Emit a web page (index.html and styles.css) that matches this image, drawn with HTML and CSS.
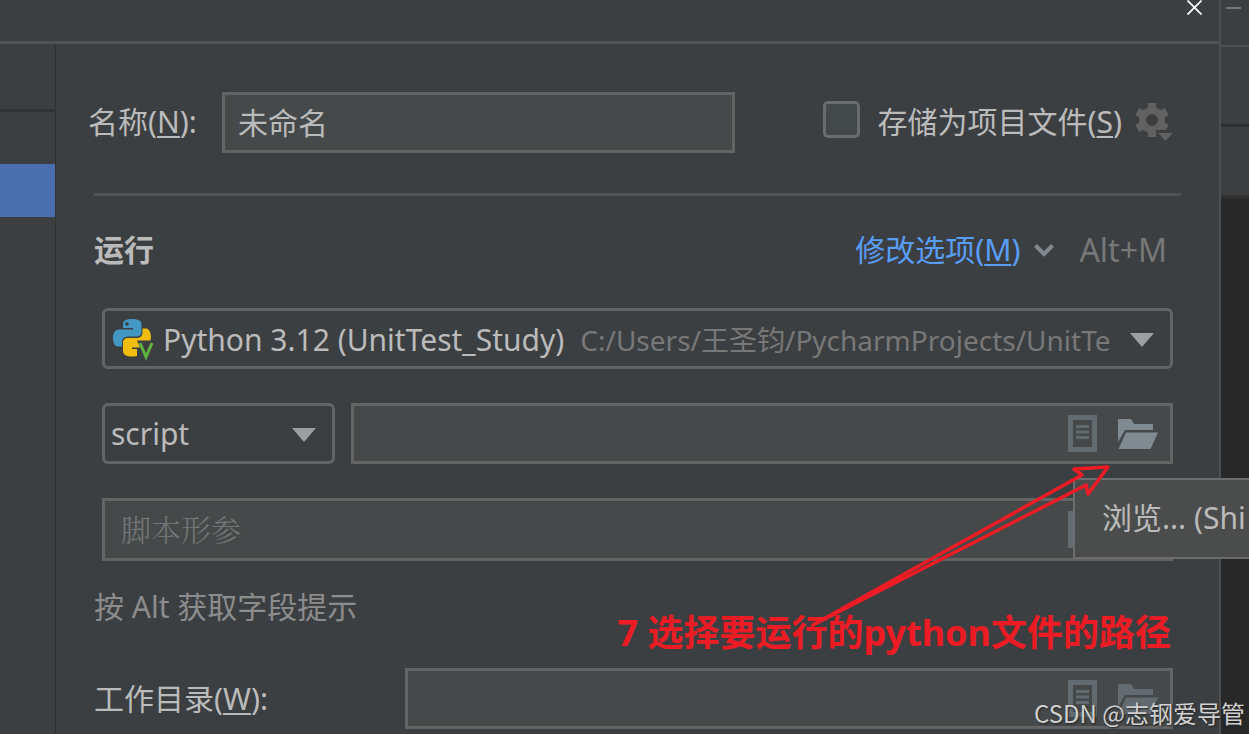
FILE: index.html
```html
<!DOCTYPE html>
<html lang="zh-CN">
<head>
<meta charset="utf-8">
<title>运行配置</title>
<link rel="stylesheet" href="styles.css">
</head>
<body>
<svg class="defs" aria-hidden="true">
  <symbol id="document" viewBox="0 0 29 37"><path fill-rule="evenodd" d="M0 0h29v37H0zM5 5v27h19V5z"/><path d="M8 10h13v3H8zM8 15.500h13v3H8zM8 21h13v3H8z"/></symbol>
  <symbol id="folder" viewBox="0 0 40 30"><path d="M0 0h13l3 5h19v6H7L0 23zM8 13.500h32L32.500 30H.5z"/></symbol>
</svg>
<div class="window">
  <section class="dialog">
    <header class="titlebar">
      <button class="close" aria-label="关闭"><svg viewBox="0 0 15 15"><path d="M.5.5l14 14M14.500.5l-14 14" fill="none" stroke="#fff" stroke-width="1.700"/></svg></button>
    </header>
    <div class="body">
      <nav class="sidebar">
        <div class="sidebar-tools"></div>
        <div class="sidebar-selected"></div>
      </nav>
      <main class="form">
        <div class="name-row">
          <label class="name-label" for="name">名称(<u>N</u>):</label>
          <input class="name-input" id="name" type="text" value="未命名">
          <input class="check" id="store" type="checkbox">
          <label for="store">存储为项目文件(<u>S</u>)</label>
          <button class="gear" aria-label="设置"><svg viewBox="0 0 37 38">
            <g fill="none" stroke="#616161">
              <circle cx="16" cy="18" r="9.500" stroke-width="7"/>
              <path stroke-width="8" d="M16 1v34"  stroke-dasharray="6 22"/>
              <path stroke-width="8" d="M16 1v34" stroke-dasharray="6 22" transform="rotate(60 16 18)"/>
              <path stroke-width="8" d="M16 1v34" stroke-dasharray="6 22" transform="rotate(120 16 18)"/>
            </g>
            <path d="M21 29h17v2l-9 8z" fill="#3c3f41" stroke="#3c3f41" stroke-width="2"/><path d="M22 31h15l-7.500 8z" fill="#616161"/></svg></button>
        </div>
        <div class="section-head">
          <h2>运行</h2>
          <a class="options" href="#">修改选项(<u>M</u>)</a>
          <svg class="chevron" viewBox="0 0 22 14"><path d="M2.500 2.500L11 11l8.500-8.500" fill="none" stroke="#7f8b91" stroke-width="4"/></svg>
          <span class="shortcut">Alt+M</span>
        </div>
        <div class="fields">
          <button class="combo" aria-haspopup="listbox">
            <svg class="python" viewBox="0 0 41 41">
              <path fill="#4297c3" d="M19 0c-6 0-9 1.500-9 5v4h10v1.500H6C2 10.500 0 14 0 19c0 5 2 8.500 5 8.500h4v-4c0-4 3-6 6.500-6h8c3 0 5-2 5-5V5c0-3.500-3.500-5-9.500-5z"/>
              <circle cx="14" cy="5" r="1.800" fill="#3c3f41"/>
              <path fill="#f0bd0c" d="M29.500 9.500H33c3 0 5 4 5 9l-.5 3H24l3 7h-8v1.500h5v7c-2 .5-3 .5-5 .5-6 0-9-2-9-5.500v-8c0-3.500 2-5 5-5h9c3.500 0 5.500-2.500 5.500-5.500z"/>
              <path d="M27 24l6 14 6-14" fill="none" stroke="#5fb33e" stroke-width="3"/>
            </svg>
            <span class="combo-text">Python 3.12 (UnitTest_Study)<span class="combo-path">C:/Users/王圣钧/PycharmProjects/UnitTe</span></span>
            <svg class="arrow" viewBox="0 0 24 14"><path d="M0 0h24L12 14z"/></svg>
          </button>
          <div class="script-row">
            <div class="select-wrap">
              <select aria-label="目标类型"><option>script</option></select>
              <svg class="arrow" viewBox="0 0 24 14"><path d="M0 0h24L12 14z"/></svg>
            </div>
            <div class="field">
              <input type="text" aria-label="脚本路径">
              <button class="macro" aria-label="插入宏"><svg viewBox="0 0 29 37"><use href="#document"/></svg></button>
              <button class="browse bright" aria-label="浏览"><svg viewBox="0 0 40 30"><use href="#folder"/></svg></button>
            </div>
          </div>
          <div class="field params">
            <input type="text" aria-label="脚本形参" placeholder="脚本形参">
            <button class="macro" aria-label="插入宏"><svg viewBox="0 0 29 37"><use href="#document"/></svg></button>
            <button class="browse" aria-label="展开"><svg viewBox="0 0 40 30"><use href="#folder"/></svg></button>
          </div>
        </div>
        <p class="hint">按 Alt 获取字段提示</p>
        <div class="dir-row">
          <label for="dir">工作目录(<u>W</u>):</label>
          <div class="field">
            <input id="dir" type="text">
            <button class="macro" aria-label="插入宏"><svg viewBox="0 0 29 37"><use href="#document"/></svg></button>
            <button class="browse" aria-label="浏览"><svg viewBox="0 0 40 30"><use href="#folder"/></svg></button>
          </div>
        </div>
      </main>
    </div>
  </section>
  <aside class="backdrop">
    <div class="back-title"><span class="minimize"></span></div>
    <div class="back-menu"></div>
    <div class="back-tabs"></div>
    <div class="back-editor"></div>
  </aside>
  <div class="tooltip" role="tooltip">浏览... (Shi</div>
  <p class="note">7 选择要运行的python文件的路径</p>
  <svg class="pointer" viewBox="0 0 310 170" aria-hidden="true"><path d="M0 163L271 12l-8-6 34-2-20 27-2-9z" fill="none" stroke="#ed1c24" stroke-width="3.500" stroke-linejoin="round"/></svg>
  <div class="watermark">CSDN @志钢爱导管</div>
</div>
</body>
</html>
```
FILE: styles.css
```css
* { box-sizing: border-box; }
body {
  margin: 0;
  background: #3c3f41;
  color: #bbb;
  font: 30px/40px "Noto Sans", "Noto Sans CJK SC", sans-serif;
}
button, input, select { font: inherit; color: inherit; }
button { padding: 0; border: 0; background: none; }
svg { display: block; }
u { text-decoration-thickness: 2px; text-underline-offset: 3px; }
.defs { position: absolute; width: 0; height: 0; }
.window { position: relative; display: flex; min-height: 100vh; overflow: hidden; }
.dialog { flex: 1; min-width: 0; display: flex; flex-direction: column; border-right: 2px solid #4e4f50; }
.titlebar { display: flex; justify-content: flex-end; height: 44px; padding-right: 17px; border-bottom: 3px solid #515151; }
.close { width: 15px; height: 15px; }
.body { flex: 1; display: flex; }
.sidebar { width: 56px; border-right: 1px solid #323232; }
.sidebar-tools { height: 68px; border-bottom: 3px solid #323232; }
.sidebar-selected { height: 53px; margin-top: 52px; background: #4b6eaf; }
.form { flex: 1; min-width: 0; padding: 48px 38px 0 32px; }

.name-row { display: flex; align-items: center; padding-right: 8px; white-space: nowrap; }
.name-row label { padding-bottom: 2px; }
.name-label { width: 134px; }
.name-input { flex: 1; min-width: 0; height: 61px; padding: 0 13px 4px; border: 3px solid #646464; background: #45494a; }
.check { appearance: none; width: 37px; height: 37px; margin: 0 18px 6px 88px; border: 3px solid #6b6b6b; border-radius: 5px; background: #43494a; }
.gear { width: 37px; height: 38px; margin: 0 0 4px 14px; }
.gear svg { overflow: visible; }

.section-head { display: flex; align-items: center; margin: 40px 0 0 6px; padding: 34px 14px 0 0; border-top: 3px solid #515151; }
h2 { flex: 1; margin: 0; font-size: 30px; line-height: 40px; font-weight: 700; }
.options { color: #589df6; text-decoration: none; }
.chevron { width: 22px; height: 14px; margin: 0 24px 0 13px; }
.shortcut { color: #777; font-size: 32px; }

.fields { display: grid; gap: 34px; margin-top: 38px; padding: 0 8px 0 14px; }
.combo, select { height: 61px; border: 3px solid #646464; border-radius: 6px; background: #3c3f41; }
.combo { display: flex; align-items: center; min-width: 0; padding: 2px 16px 0 8px; text-align: left; }
.python { flex: none; width: 41px; height: 41px; margin-right: 9px; overflow: visible; }
.combo-text { flex: 1; min-width: 0; overflow: hidden; white-space: nowrap; }
.combo-path { margin-left: 16px; color: #787878; font-size: 28px; }
.arrow { flex: none; width: 24px; height: 14px; margin-left: 16px; fill: #9b9fa3; }
.script-row { display: flex; gap: 16px; }
.select-wrap { position: relative; width: 233px; }
select { appearance: none; width: 100%; padding: 0 6px; }
.select-wrap .arrow { position: absolute; right: 19px; top: 25px; pointer-events: none; }
.field { flex: 1; min-width: 0; display: flex; align-items: center; height: 61px; padding-right: 12px; border: 3px solid #646464; background: #45494a; }
.field input { flex: 1; min-width: 0; height: 100%; padding: 0 16px; border: 0; background: none; outline: 0; }
.field input::placeholder { color: #737676; font-family: "Noto Serif CJK SC", "Noto Sans CJK SC", serif; font-weight: 300; opacity: 1; }
.params { height: 63px; }
.macro { width: 29px; height: 37px; margin-right: 21px; fill: #626b70; }
.browse { width: 40px; height: 30px; fill: #626b70; }
.bright { fill: #7f8b91; }
.hint { margin: 26px 0 0 6px; color: #8c8c8c; }
.dir-row { display: flex; align-items: center; margin: 41px 8px 0 6px; }
.dir-row label { width: 311px; }

.backdrop { width: 28px; display: flex; flex-direction: column; }
.back-title { height: 47px; border-bottom: 2px solid #515151; }
.minimize { display: block; width: 15px; height: 2px; margin: 7px 0 0 5px; background: #777; }
.back-menu { height: 80px; border-bottom: 3px solid #2e2e2e; }
.back-tabs { height: 71px; border-bottom: 3px solid #333; }
.back-editor { flex: 1; background: #282828; }

.tooltip { position: absolute; left: 1073px; right: -3px; top: 478px; padding: 18px 0 19px 27px; border: 2px solid #6b6d70; background: #4b4d4d; white-space: nowrap; overflow: hidden; }
.note { position: absolute; right: 78px; top: 609px; margin: 0; color: #ed1c24; font-size: 36px; line-height: 48px; font-weight: 700; white-space: nowrap; }
.pointer { position: absolute; left: 811px; top: 463px; width: 310px; height: 170px; }
.watermark { position: absolute; right: 4px; bottom: 5px; color: #d0d0d0; font-family: "Noto Sans CJK SC", sans-serif; font-size: 24px; line-height: 32px; text-shadow: 1px 1px 2px #222; white-space: nowrap; }
```
